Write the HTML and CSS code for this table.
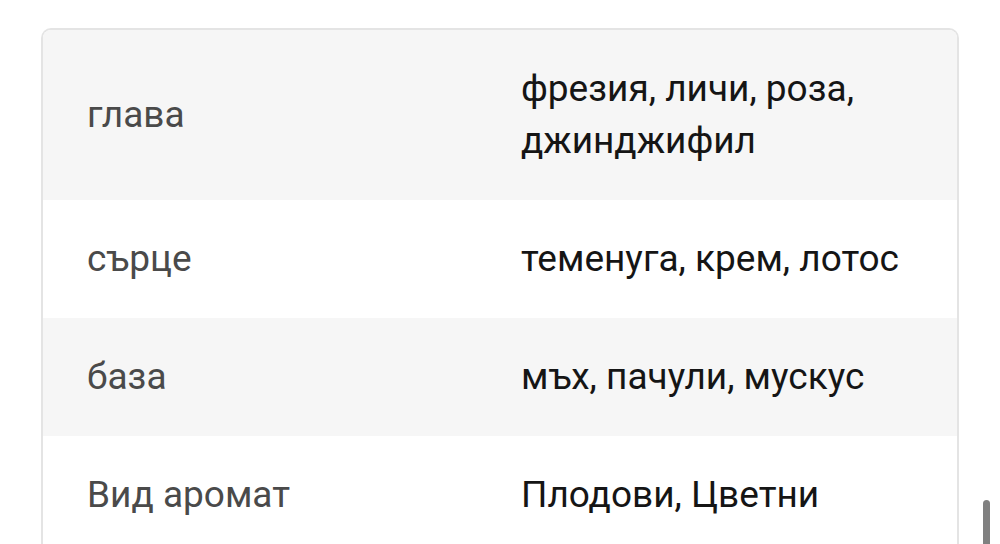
FILE: index.html
```html
<!DOCTYPE html>
<html lang="bg">
<head>
<meta charset="utf-8">
<link rel="stylesheet" href="styles.css">
</head>
<body>
<div class="page">
  <table class="specs">
    <tr class="row shaded">
      <td class="label">глава</td>
      <td class="value">фрезия, личи, роза,<br>джинджифил</td>
    </tr>
    <tr class="row">
      <td class="label">сърце</td>
      <td class="value">теменуга, крем, лотос</td>
    </tr>
    <tr class="row shaded">
      <td class="label">база</td>
      <td class="value">мъх, пачули, мускус</td>
    </tr>
    <tr class="row">
      <td class="label">Вид аромат</td>
      <td class="value">Плодови, Цветни</td>
    </tr>
  </table>
</div>
<div class="scrollbar"></div>
</body>
</html>
```
FILE: styles.css
```css
html, body {
  margin: 0;
  padding: 0;
  background: #ffffff;
  height: 544px;
  overflow: hidden;
}
body {
  font-family: Roboto, "Noto Sans", sans-serif;
}
.page {
  padding: 28px 0 0 41px;
}
.specs {
  width: 918px;
  border-collapse: separate;
  border-spacing: 0;
  border: 2px solid #e4e4e4;
  border-bottom: 0;
  border-radius: 10px 10px 0 0;
  overflow: hidden;
}
.row td {
  padding: 33px 0;
  font-size: 37px;
  line-height: 52px;
  vertical-align: middle;
}
.row.shaded td {
  background: #f6f6f6;
}
.label {
  width: 434px;
  padding-left: 44px !important;
  color: #4a4a4a;
}
.value {
  color: #151515;
}
.scrollbar {
  position: absolute;
  left: 983px;
  top: 500px;
  width: 7px;
  height: 60px;
  border-radius: 4px;
  background: #808080;
}
```
